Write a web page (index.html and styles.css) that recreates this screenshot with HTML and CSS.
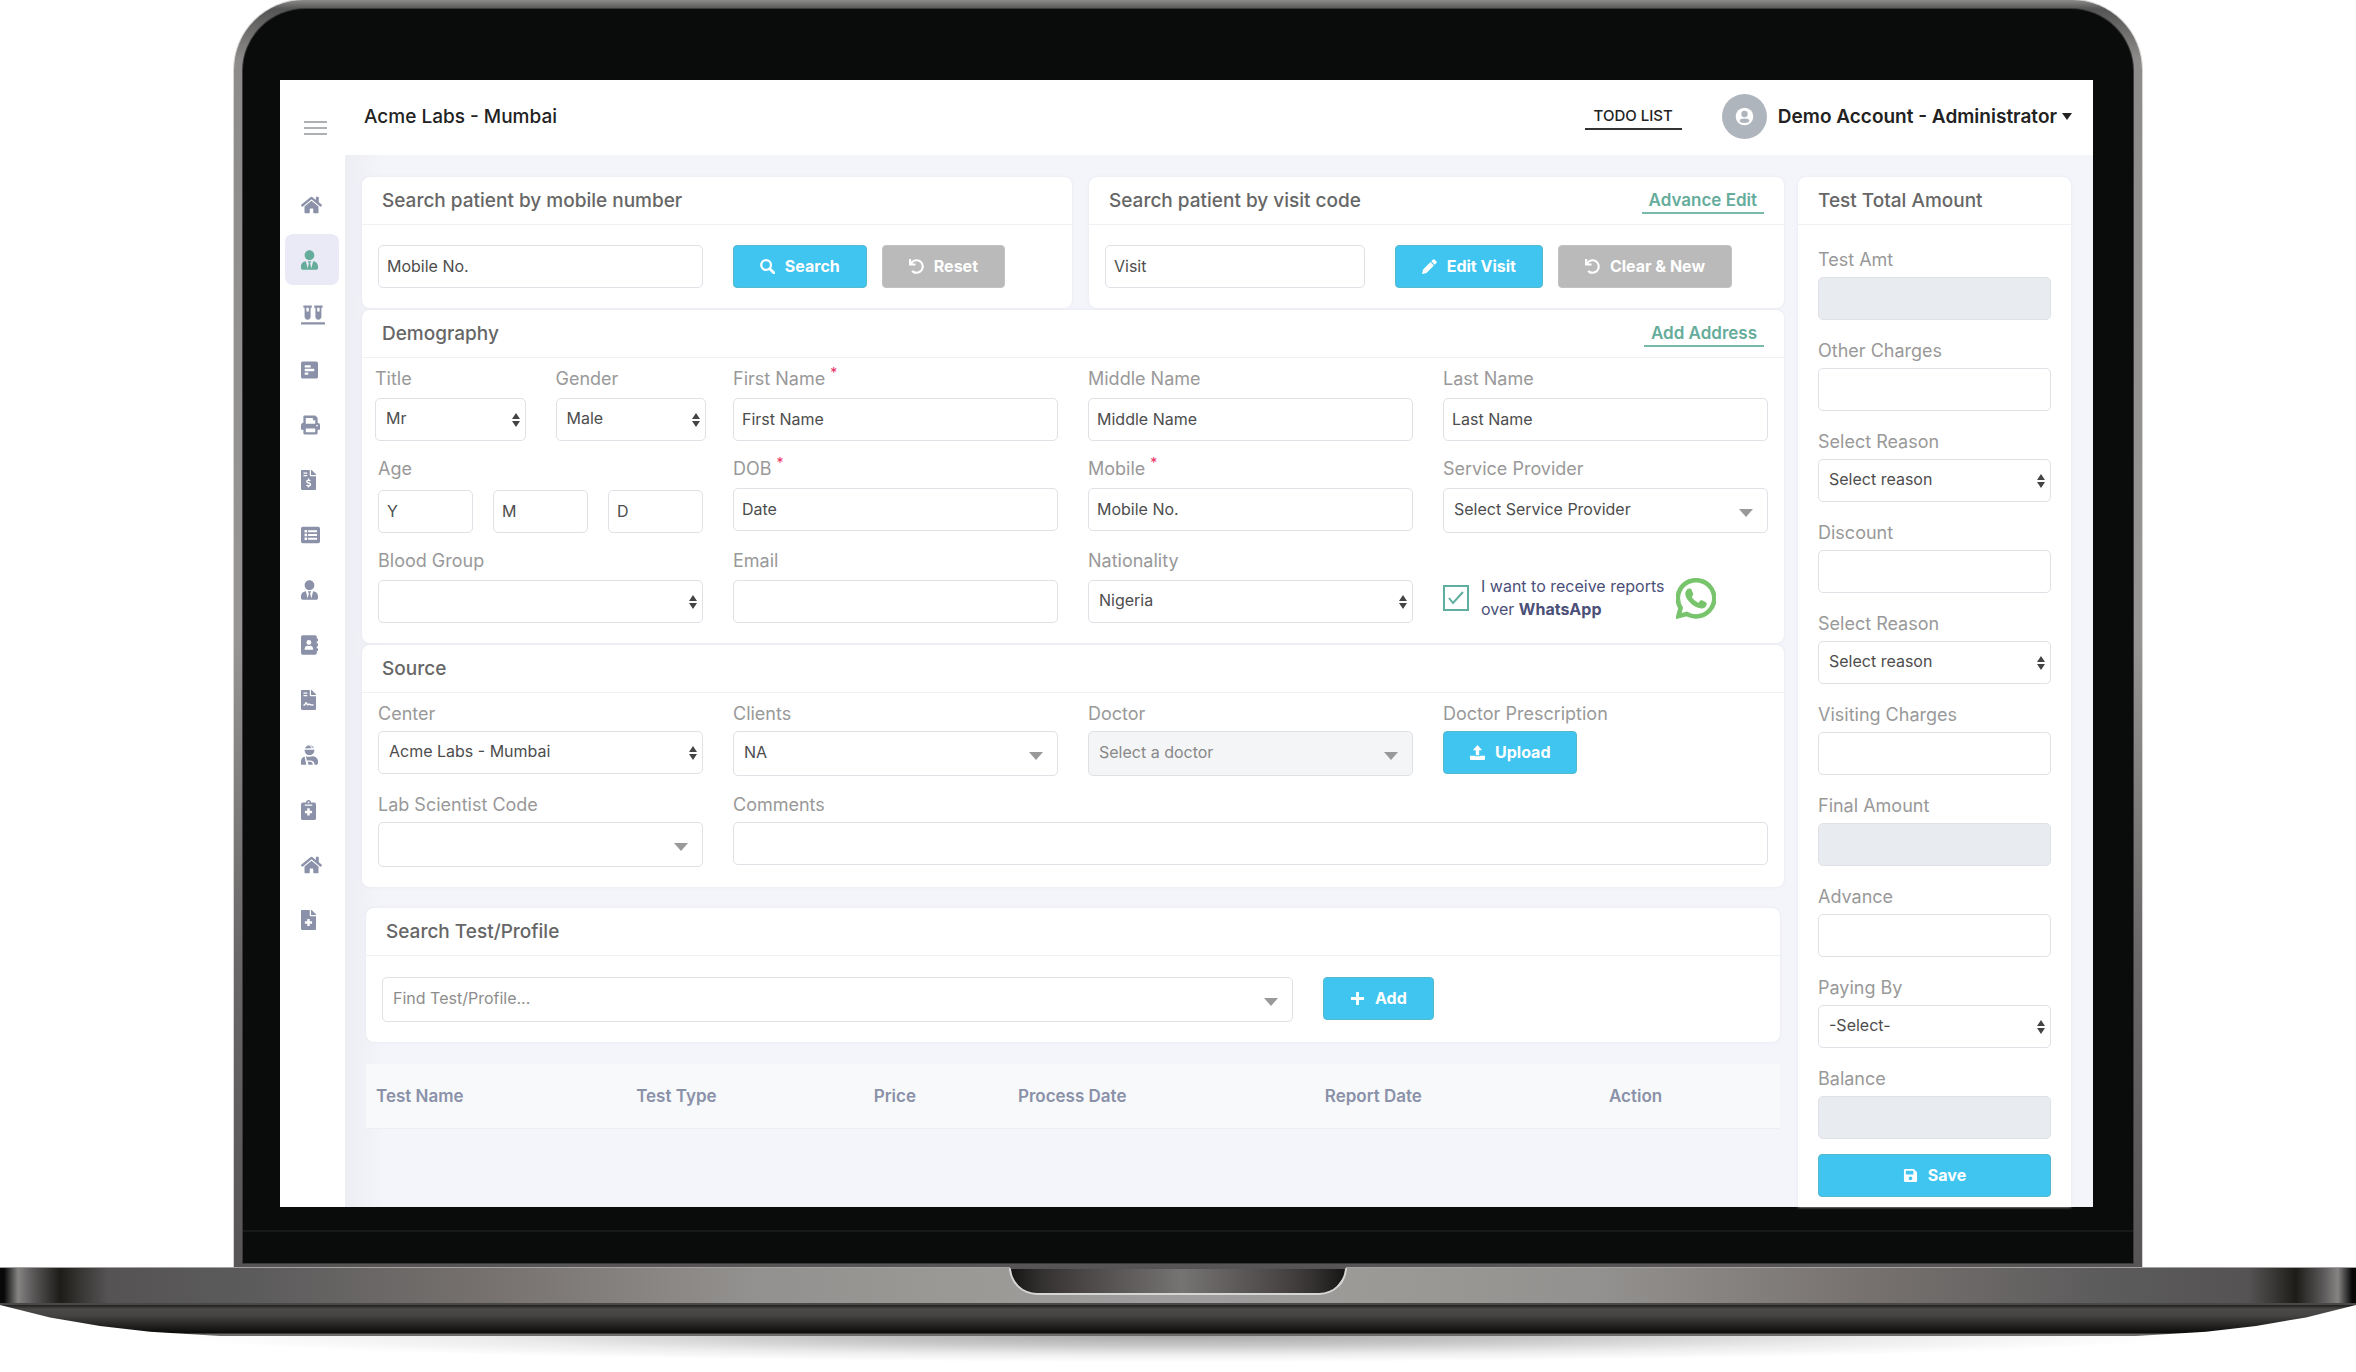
FILE: index.html
```html
<!DOCTYPE html>
<html lang="en">
<head>
<meta charset="utf-8">
<meta name="viewport" content="width=device-width, initial-scale=1">
<title>Acme Labs - Mumbai</title>
<link rel="stylesheet" href="styles.css">
</head>
<body>
<svg class="sprite" aria-hidden="true">
  <symbol id="home" viewBox="0 0 576 512"><path d="M280.37 148.26L96 300.11V464a16 16 0 0 0 16 16l112.06-.29a16 16 0 0 0 15.92-16V368a16 16 0 0 1 16-16h64a16 16 0 0 1 16 16v95.64a16 16 0 0 0 16 16.05L464 480a16 16 0 0 0 16-16V300L295.67 148.26a12.19 12.19 0 0 0-15.3 0zM571.6 251.47L488 182.56V44.05a12 12 0 0 0-12-12h-56a12 12 0 0 0-12 12v72.61L318.47 43a48 48 0 0 0-61 0L4.34 251.47a12 12 0 0 0-1.6 16.9l25.5 31A12 12 0 0 0 45.15 301l235.22-193.74a12.19 12.19 0 0 1 15.3 0L530.9 301a12 12 0 0 0 16.9-1.6l25.5-31a12 12 0 0 0-1.7-16.93z"/></symbol>
  <symbol id="user-tie" viewBox="0 0 448 512"><path d="M224 256c70.7 0 128-57.3 128-128S294.7 0 224 0 96 57.3 96 128s57.3 128 128 128zm95.8 32.6L272 480l-32-136 32-56h-96l32 56-32 136-47.8-191.4C56.9 292 0 350.3 0 422.4V464c0 26.5 21.5 48 48 48h352c26.5 0 48-21.5 48-48v-41.6c0-72.1-56.9-130.4-128.2-133.8z"/></symbol>
  <symbol id="vials" viewBox="0 0 640 512"><path d="M72 64h24v240c0 44.1 35.9 80 80 80s80-35.9 80-80V64h24c4.4 0 8-3.6 8-8V8c0-4.4-3.6-8-8-8H72c-4.4 0-8 3.6-8 8v48c0 4.4 3.6 8 8 8zm72 0h64v96h-64V64zm480 384H16c-8.8 0-16 7.2-16 16v32c0 8.8 7.2 16 16 16h608c8.8 0 16-7.2 16-16v-32c0-8.8-7.2-16-16-16zM360 64h24v240c0 44.1 35.9 80 80 80s80-35.9 80-80V64h24c4.4 0 8-3.6 8-8V8c0-4.4-3.6-8-8-8H360c-4.4 0-8 3.6-8 8v48c0 4.4 3.6 8 8 8zm72 0h64v96h-64V64z"/></symbol>
  <symbol id="poll" viewBox="0 0 448 512"><path d="M448 432V80c0-26.5-21.5-48-48-48H48C21.5 32 0 53.5 0 80v352c0 26.5 21.5 48 48 48h352c26.5 0 48-21.5 48-48zM112 192c-8.84 0-16-7.16-16-16v-32c0-8.84 7.16-16 16-16h128c8.84 0 16 7.16 16 16v32c0 8.84-7.16 16-16 16H112zm0 96c-8.84 0-16-7.16-16-16v-32c0-8.84 7.16-16 16-16h224c8.84 0 16 7.16 16 16v32c0 8.84-7.16 16-16 16H112zm0 96c-8.84 0-16-7.16-16-16v-32c0-8.84 7.16-16 16-16h64c8.84 0 16 7.16 16 16v32c0 8.84-7.16 16-16 16h-64z"/></symbol>
  <symbol id="print" viewBox="0 0 512 512"><path d="M448 192V77.25c0-8.49-3.37-16.62-9.37-22.63L393.37 9.37c-6-6-14.14-9.37-22.63-9.37H96C78.33 0 64 14.33 64 32v160c-35.35 0-64 28.65-64 64v112c0 8.84 7.16 16 16 16h48v96c0 17.67 14.33 32 32 32h320c17.67 0 32-14.33 32-32v-96h48c8.84 0 16-7.16 16-16V256c0-35.35-28.65-64-64-64zm-64 256H128v-96h256v96zm0-224H128V64h192v48c0 8.84 7.16 16 16 16h48v96zm48 72c-13.25 0-24-10.75-24-24 0-13.26 10.75-24 24-24s24 10.74 24 24c0 13.25-10.75 24-24 24z"/></symbol>
  <symbol id="file" viewBox="0 0 384 512"><path d="M224 136V0H24C10.700 0 0 10.700 0 24v464c0 13.300 10.700 24 24 24h336c13.300 0 24-10.700 24-24V160H248c-13.200 0-24-10.800-24-24z"/><path d="M384 121.900v6.100H256V0h6.100c6.400 0 12.500 2.500 17 7l97.900 98c4.500 4.500 7 10.600 7 16.900z"/></symbol>
  <symbol id="invoice" viewBox="0 0 384 512"><use href="#file"/><g fill="none" stroke="#fff" stroke-width="28"><path d="M64 80h96M64 144h96"/><path stroke-width="36" d="M240 278c-24-20-94-22-94 18 0 48 98 26 98 74 0 42-74 40-102 16M192 220v44M192 400v46"/></g></symbol>
  <symbol id="contract" viewBox="0 0 384 512"><use href="#file"/><g fill="none" stroke="#fff"><path stroke-width="28" d="M64 80h96M64 144h96"/><path stroke-width="36" d="M64 384h24c22 0 26-58 44-58 20 0 18 58 40 56 24-2 28-40 50-14 10 16 30 16 98 16"/></g></symbol>
  <symbol id="medical" viewBox="0 0 384 512"><use href="#file"/><path fill="#fff" d="M160 230h64v58h60v64h-60v60h-64v-60h-60v-64h60z"/></symbol>
  <symbol id="list" viewBox="0 0 512 512"><rect y="32" width="512" height="448" rx="48"/><path fill="#fff" d="M96 122h68v68H96zM96 222h68v68H96zM96 322h68v68H96zM192 128h240v56H192zM192 228h240v56H192zM192 328h240v56H192z"/></symbol>
  <symbol id="book" viewBox="0 0 448 512"><rect width="416" height="512" rx="48"/><rect x="400" y="84" width="48" height="76" rx="14"/><rect x="400" y="212" width="48" height="76" rx="14"/><rect x="400" y="340" width="48" height="76" rx="14"/><circle cx="208" cy="190" r="64" fill="#fff"/><path fill="#fff" d="M96 384v-30c0-44 34-76 70-80 26 12 58 12 84 0 36 4 70 36 70 80v30z"/></symbol>
  <symbol id="injured" viewBox="0 0 448 512"><path d="M224 0c50 0 94 28 114 70L106 82C128 32 172 0 224 0zM98 116h252c12 76-46 140-126 140S86 192 98 116z"/><path fill="#fff" d="M210 0l70 70h36L246 0z"/><path d="M0 512v-90c0-60 38-110 92-127l48 217zM128 288c30 10 50 14 96 14 34 0 66-8 92-14 74 6 132 64 132 134v42c0 26-22 48-48 48h-42c0-60-42-112-120-112h-84z"/><path d="M176 436h62c42 0 72 30 72 76H196z"/></symbol>
  <symbol id="clipboard" viewBox="0 0 384 512"><rect y="64" width="384" height="448" rx="48"/><circle cx="192" cy="64" r="64"/><circle cx="192" cy="60" r="24" fill="#fff"/><path fill="#fff" d="M96 118h192v30H96zM160 212h64v60h60v64h-60v60h-64v-60h-60v-64h60z"/></symbol>
  <symbol id="undo" viewBox="0 0 512 512"><path d="M212.333 224.333H12c-6.627 0-12-5.373-12-12V12C0 5.373 5.373 0 12 0h48c6.627 0 12 5.373 12 12v78.112C117.773 39.279 184.26 7.47 258.175 8.007c136.906.994 246.448 111.623 246.157 248.532C504.041 393.258 393.12 504 256.333 504c-64.089 0-122.496-24.313-166.51-64.215-5.099-4.622-5.334-12.554-.467-17.42l33.967-33.967c4.474-4.474 11.662-4.717 16.401-.525C170.76 415.336 211.58 432 256.333 432c97.268 0 176-78.716 176-176 0-97.267-78.716-176-176-176-58.496 0-110.28 28.476-142.274 72.333h98.274c6.627 0 12 5.373 12 12v48c0 6.627-5.373 12-12 12z"/></symbol>
  <symbol id="search" viewBox="0 0 16 16"><circle cx="6.500" cy="6.500" r="5.200" fill="none" stroke="currentColor" stroke-width="2.400"/><path d="M10.400 10.400l4.300 4.300" stroke="currentColor" stroke-width="3" stroke-linecap="round"/></symbol>
  <symbol id="pencil" viewBox="0 0 16 16"><path d="M11.600.8a1.500 1.500 0 0 1 2.100 0l1.500 1.500a1.500 1.500 0 0 1 0 2.100l-1.700 1.700-3.600-3.600zM9.100 3.300l3.600 3.600-7.900 7.900L0 16l1.200-4.800z"/></symbol>
  <symbol id="upload" viewBox="0 0 16 16"><path d="M8 0l5 5.500H9.800V11H6.200V5.500H3z"/><path d="M0 11.500h5.200V12h5.600v-.5H16V15a1 1 0 0 1-1 1H1a1 1 0 0 1-1-1z"/></symbol>
  <symbol id="plus" viewBox="0 0 16 16"><path d="M6.500 1h3v5.500H15v3H9.500V15h-3V9.500H1v-3h5.500z"/></symbol>
  <symbol id="save" viewBox="0 0 16 16"><path fill-rule="evenodd" d="M2.500 1h9L15 4.500v9a1.500 1.500 0 0 1-1.500 1.500h-11A1.500 1.500 0 0 1 1 13.500v-11A1.500 1.500 0 0 1 2.500 1zM3 3v4h8V3zm5 6a2 2 0 1 0 0 4 2 2 0 0 0 0-4z"/></symbol>
  <symbol id="whatsapp" viewBox="0 32 448 448"><path d="M380.9 97.1C339 55.1 283.2 32 223.900 32c-122.400 0-222 99.600-222 222 0 39.100 10.200 77.300 29.600 111L0 480l117.700-30.900c32.400 17.700 68.900 27 106.100 27h.1c122.300 0 224.100-99.600 224.100-222 0-59.300-25.200-115-67.100-157zm-157 341.600c-33.200 0-65.700-8.900-94-25.700l-6.700-4-69.800 18.300L72 359.200l-4.400-7c-18.500-29.400-28.200-63.300-28.200-98.200 0-101.700 82.800-184.500 184.600-184.500 49.300 0 95.600 19.200 130.400 54.100 34.800 34.900 56.200 81.200 56.100 130.500 0 101.800-84.900 184.600-186.600 184.600zm101.200-138.200c-5.500-2.800-32.800-16.200-37.900-18-5.100-1.900-8.800-2.800-12.500 2.800-3.700 5.600-14.300 18-17.600 21.800-3.200 3.700-6.500 4.200-12 1.400-32.600-16.300-54-29.100-75.500-66-5.700-9.800 5.700-9.100 16.300-30.300 1.800-3.700.9-6.900-.5-9.700-1.400-2.800-12.500-30.100-17.100-41.200-4.500-10.800-9.100-9.300-12.500-9.500-3.200-.2-6.900-.2-10.600-.2-3.700 0-9.700 1.400-14.800 6.900-5.100 5.600-19.400 19-19.400 46.300 0 27.300 19.900 53.700 22.600 57.400 2.800 3.700 39.100 59.700 94.800 83.800 35.200 15.200 49 16.500 66.600 13.900 10.700-1.600 32.800-13.400 37.400-26.400 4.600-13 4.600-24.100 3.200-26.400-1.300-2.500-5-3.900-10.500-6.600z" stroke="currentColor" stroke-width="14"/></symbol>
</svg>

<div class="laptop">
  <div class="lid">
    <div class="bezel">
      <div class="app">
        <aside class="sidebar">
          <button class="menu" type="button" aria-label="Toggle menu"><span></span><span></span><span></span></button>
          <nav class="nav" aria-label="Main">
            <a href="#" aria-label="Home"><svg class="w21"><use href="#home"/></svg></a>
            <a href="#" aria-label="Patients" class="active"><svg class="w17"><use href="#user-tie"/></svg></a>
            <a href="#" aria-label="Samples"><svg class="w24"><use href="#vials"/></svg></a>
            <a href="#" aria-label="Results"><svg class="w17"><use href="#poll"/></svg></a>
            <a href="#" aria-label="Print"><svg class="w19"><use href="#print"/></svg></a>
            <a href="#" aria-label="Invoices"><svg class="w15"><use href="#invoice"/></svg></a>
            <a href="#" aria-label="Lists"><svg class="w19"><use href="#list"/></svg></a>
            <a href="#" aria-label="Staff"><svg class="w17"><use href="#user-tie"/></svg></a>
            <a href="#" aria-label="Contacts"><svg class="w17"><use href="#book"/></svg></a>
            <a href="#" aria-label="Contracts"><svg class="w15"><use href="#contract"/></svg></a>
            <a href="#" aria-label="Care"><svg class="w17"><use href="#injured"/></svg></a>
            <a href="#" aria-label="Notes"><svg class="w15"><use href="#clipboard"/></svg></a>
            <a href="#" aria-label="Centers"><svg class="w21"><use href="#home"/></svg></a>
            <a href="#" aria-label="Records"><svg class="w15"><use href="#medical"/></svg></a>
          </nav>
        </aside>

        <div class="main">
          <header class="topbar">
            <h1>Acme Labs - Mumbai</h1>
            <a class="todo" href="#">TODO LIST</a>
            <button class="account" type="button">
              <svg class="avatar" viewBox="0 0 45 45"><circle cx="22.500" cy="22.500" r="22.500" fill="#aeb5bd"/><circle cx="22.500" cy="22.500" r="8.800" fill="#fff"/><circle cx="22.500" cy="20" r="3.200" fill="#aeb5bd"/><ellipse cx="22.500" cy="26.800" rx="4.800" ry="2.200" fill="#aeb5bd"/></svg>
              <span>Demo Account - Administrator</span>
              <i class="caret"></i>
            </button>
          </header>

          <div class="content">
            <main class="forms">
              <div class="searches">
                <section class="card">
                  <header><h2>Search patient by mobile number</h2></header>
                  <form class="bar">
                    <input class="control grow" type="text" placeholder="Mobile No." aria-label="Mobile number">
                    <div class="buttons">
                      <button class="btn" type="button"><svg><use href="#search"/></svg>Search</button>
                      <button class="btn muted" type="button"><svg><use href="#undo"/></svg>Reset</button>
                    </div>
                  </form>
                </section>
                <section class="card">
                  <header><h2>Search patient by visit code</h2><a href="#">Advance Edit</a></header>
                  <form class="bar">
                    <input class="control grow" type="text" placeholder="Visit" aria-label="Visit code">
                    <div class="buttons">
                      <button class="btn" type="button"><svg><use href="#pencil"/></svg>Edit Visit</button>
                      <button class="btn muted" type="button"><svg><use href="#undo"/></svg>Clear &amp; New</button>
                    </div>
                  </form>
                </section>
              </div>

              <section class="card">
                <header><h2>Demography</h2><a href="#">Add Address</a></header>
                <form class="fields">
                  <div class="pair">
                    <div class="field"><label for="title">Title</label><select class="control updown" id="title"><option>Mr</option></select></div>
                    <div class="field"><label for="gender">Gender</label><select class="control updown" id="gender"><option>Male</option></select></div>
                  </div>
                  <div class="field"><label for="first">First Name <sup>*</sup></label><input class="control" id="first" type="text" placeholder="First Name"></div>
                  <div class="field"><label for="middle">Middle Name</label><input class="control" id="middle" type="text" placeholder="Middle Name"></div>
                  <div class="field"><label for="last">Last Name</label><input class="control" id="last" type="text" placeholder="Last Name"></div>

                  <div class="field age">
                    <label for="years">Age</label>
                    <div class="trio">
                      <input class="control" id="years" type="text" placeholder="Y">
                      <input class="control" type="text" placeholder="M" aria-label="Months">
                      <input class="control" type="text" placeholder="D" aria-label="Days">
                    </div>
                  </div>
                  <div class="field"><label for="dob">DOB <sup>*</sup></label><input class="control" id="dob" type="text" placeholder="Date"></div>
                  <div class="field"><label for="mobile">Mobile <sup>*</sup></label><input class="control" id="mobile" type="text" placeholder="Mobile No."></div>
                  <div class="field"><label for="provider">Service Provider</label><select class="control drop" id="provider"><option>Select Service Provider</option></select></div>

                  <div class="field"><label for="blood">Blood Group</label><select class="control updown" id="blood"><option></option></select></div>
                  <div class="field"><label for="email">Email</label><input class="control" id="email" type="email"></div>
                  <div class="field"><label for="nation">Nationality</label><select class="control updown" id="nation"><option>Nigeria</option></select></div>
                  <div class="consent">
                    <input type="checkbox" id="wa" checked>
                    <label for="wa">I want to receive reports<br>over <b>WhatsApp</b></label>
                    <svg><use href="#whatsapp"/></svg>
                  </div>
                </form>
              </section>

              <section class="card">
                <header><h2>Source</h2></header>
                <form class="fields tight">
                  <div class="field"><label for="center">Center</label><select class="control updown" id="center"><option>Acme Labs - Mumbai</option></select></div>
                  <div class="field"><label for="clients">Clients</label><select class="control drop" id="clients"><option>NA</option></select></div>
                  <div class="field"><label for="doctor">Doctor</label><select class="control drop" id="doctor" disabled><option>Select a doctor</option></select></div>
                  <div class="field"><label for="rx">Doctor Prescription</label><button class="btn" id="rx" type="button"><svg><use href="#upload"/></svg>Upload</button></div>
                  <div class="field"><label for="code">Lab Scientist Code</label><select class="control drop" id="code"><option></option></select></div>
                  <div class="field wide"><label for="comments">Comments</label><input class="control" id="comments" type="text"></div>
                </form>
              </section>

              <div class="tests">
                <section class="card">
                  <header><h2>Search Test/Profile</h2></header>
                  <form class="bar">
                    <select class="control drop hint" aria-label="Find test or profile"><option>Find Test/Profile...</option></select>
                    <button class="btn" type="button"><svg><use href="#plus"/></svg>Add</button>
                  </form>
                </section>
                <table>
                  <thead><tr><th>Test Name</th><th>Test Type</th><th>Price</th><th>Process Date</th><th>Report Date</th><th>Action</th></tr></thead>
                </table>
              </div>
            </main>

            <aside class="card totals">
              <header><h2>Test Total Amount</h2></header>
              <form>
                <div class="field"><label for="amt">Test Amt</label><input class="control" id="amt" type="text" disabled></div>
                <div class="field"><label for="other">Other Charges</label><input class="control" id="other" type="text"></div>
                <div class="field"><label for="r1">Select Reason</label><select class="control updown" id="r1"><option>Select reason</option></select></div>
                <div class="field"><label for="disc">Discount</label><input class="control" id="disc" type="text"></div>
                <div class="field"><label for="r2">Select Reason</label><select class="control updown" id="r2"><option>Select reason</option></select></div>
                <div class="field"><label for="visit">Visiting Charges</label><input class="control" id="visit" type="text"></div>
                <div class="field"><label for="final">Final Amount</label><input class="control" id="final" type="text" disabled></div>
                <div class="field"><label for="adv">Advance</label><input class="control" id="adv" type="text"></div>
                <div class="field"><label for="pay">Paying By</label><select class="control updown" id="pay"><option>-Select-</option></select></div>
                <div class="field last"><label for="bal">Balance</label><input class="control" id="bal" type="text" disabled></div>
                <button class="btn" type="button"><svg><use href="#save"/></svg>Save</button>
              </form>
            </aside>
          </div>
        </div>
      </div>
      <div class="chin"></div>
    </div>
  </div>
  <div class="deck"><div class="notch"></div></div>
  <div class="underside"></div>
  <div class="shadow"></div>
</div>
</body>
</html>
```

FILE: styles.css
```css
* { box-sizing: border-box; }

body {
  margin: 0;
  background: #fff;
  color: #555;
  font: 16px/24px Inter, "Open Sans", sans-serif;
}

h1, h2 { margin: 0; font-weight: 500; }
a { text-decoration: none; }
button, input, select { font: inherit; margin: 0; }
svg { display: block; fill: currentColor; flex: none; }
.sprite { width: 0; height: 0; position: absolute; }

/* Laptop body */
.laptop { overflow: hidden; }

.lid {
  margin: 0 214px 0 234px;
  padding: 9px 9px 4px;
  border-radius: 70px 70px 0 0;
  background: linear-gradient(#8b8b8a, #555 9px, #8e8c8a 60px, #989694 50%, #6a6868 75%, #575556);
  box-shadow: 0 0 0 1px #d4d4d3;
}

.bezel {
  padding: 71px 40px 0 37px;
  border-radius: 62px 62px 0 0;
  background: #090c0b;
  box-shadow: 0 0 0 1px #3a3a3a;
}

.chin { height: 56px; padding-top: 23px; }
.chin::before { content: ""; display: block; height: 2px; margin: 0 -40px 0 -37px; background: #171a19; }

.deck {
  height: 38px;
  border-top: 1px solid #a3a1a1;
  border-bottom: 2px solid #4a4949;
  background: linear-gradient(90deg, #080808 0, #080808 4px, #858483 18px, #5d5b5b 32px, #1d1c19 60px, #3b3a38 84px, #555354 108px, #5d5c5c 11%, #777270 21%, #93918f 32%, #9c9a97 42%, #9f9d9e 50%, #9c9a97 58%, #93918f 68%, #777270 79%, #5d5c5c 89%, #555354 calc(100% - 108px), #3b3a38 calc(100% - 84px), #1d1c19 calc(100% - 60px), #5d5b5b calc(100% - 32px), #858483 calc(100% - 18px), #080808 calc(100% - 4px));
}

.notch {
  width: 338px;
  height: 28px;
  margin: -1px auto 0;
  border: 2px solid #d6d5d5;
  border-top: 2px solid #555;
  border-radius: 0 0 30px 30px;
  background: linear-gradient(90deg, #151513, #33312f 9%, #4b4747 22%, #767473 51%, #4b4747 80%, #33312f 91%, #151513);
}

.underside {
  height: 31px;
  background: linear-gradient(#1f1f1e, #4a4946 4px, #474543 10px, #0b0b0a 28px, #6c6a6a 29px);
  clip-path: polygon(0 0, 100% 0, calc(100% - 50px) 40%, calc(100% - 100px) 68%, calc(100% - 150px) 86%, calc(100% - 220px) 100%, 220px 100%, 150px 86%, 100px 68%, 50px 40%);
}

.shadow {
  height: 26px;
  margin: 0 180px;
  background: radial-gradient(ellipse 50% 100% at 50% 0, #aaa, #c6c6c6 35%, #ececec 70%, #fff);
}

/* Application shell */
.app { display: grid; grid-template-columns: 65px 1fr; background: #fff; }

.sidebar { display: flex; flex-direction: column; align-items: flex-start; }

.menu {
  display: flex;
  flex-direction: column;
  gap: 4px;
  margin: 41px 0 44px 24px;
  padding: 0;
  border: 0;
  background: none;
}
.menu span { width: 23px; height: 2px; background: #adb1b6; }

.nav { display: grid; gap: 4px; margin-left: 5px; }
.nav a {
  display: flex;
  align-items: center;
  width: 54px;
  height: 51px;
  padding-left: 16px;
  border-radius: 8px;
  color: #8a91a8;
}
.nav .active { background: #e9eaf6; color: #66ac9b; }
.nav svg { height: 20px; }
.w15 { width: 15px; }
.w17 { width: 17px; }
.w19 { width: 19px; }
.w21 { width: 21px; }
.w24 { width: 24px; }

.main { display: flex; flex-direction: column; min-width: 0; background: #f4f5fa; }

.topbar {
  display: flex;
  align-items: center;
  height: 75px;
  padding: 0 21px 2px 19px;
  background: #fff;
  color: #222;
}
.topbar h1 { flex: 1; font-size: 19px; }

.todo {
  margin-right: 40px;
  padding: 0 9px;
  border-bottom: 2px solid #333;
  color: #222;
  font-size: 15px;
  font-weight: 500;
}

.account {
  display: flex;
  align-items: center;
  padding: 0;
  border: 0;
  background: none;
  color: #222;
  font-size: 19px;
  font-weight: 600;
}
.avatar { width: 45px; height: 45px; margin-right: 11px; }
.caret { margin-left: 5px; border: 5px solid transparent; border-top: 7px solid #222; border-bottom: 0; }

.content {
  flex: 1;
  display: grid;
  grid-template-columns: minmax(0, 1fr) 273px;
  gap: 14px;
  padding: 22px 22px 0 17px;
  background: linear-gradient(90deg, #ededf4, #f4f5fa 40px);
}

/* Cards */
.card { border-radius: 8px; background: #fff; box-shadow: 0 0 3px #e4e5ec; }
.card > header {
  display: flex;
  align-items: center;
  justify-content: space-between;
  height: 48px;
  padding: 0 20px;
  border-bottom: 1px solid #f0f1f4;
}
.card h2 { color: #666; font-size: 19px; }
.card header a {
  padding: 0 7px;
  border-bottom: 2px solid #79b9ab;
  color: #66ac9b;
  font-size: 17px;
  font-weight: 600;
}

.forms { display: flex; flex-direction: column; gap: 2px; }
.searches { display: grid; grid-template-columns: 710fr 695fr; gap: 17px; }

.bar { display: flex; gap: 30px; padding: 20px 16px; }
.bar .grow { flex: 1; }
.buttons { display: flex; gap: 15px; padding-right: 36px; }
.searches .card:first-child .buttons { padding-right: 51px; }

/* Form controls */
.control {
  display: block;
  width: 100%;
  min-width: 0;
  height: 43px;
  padding: 0 8px 2px;
  border: 1px solid #dfe1e6;
  border-radius: 5px;
  background: #fff;
  color: #4d4d4d;
  appearance: none;
}
.control::placeholder { color: #4d4d4d; opacity: 1; }
.control:disabled { background-color: #e8ecf0; opacity: 1; }

.updown {
  padding: 0 24px 3px 10px;
  background: #fff url("data:image/svg+xml,%3Csvg xmlns='http://www.w3.org/2000/svg' width='8' height='14'%3E%3Cpath d='M0 6l4-6 4 6zM0 8h8l-4 6z' fill='%23444'/%3E%3C/svg%3E") no-repeat right 5px center;
}
.drop {
  height: 45px;
  padding: 0 40px 4px 10px;
  background: #fff url("data:image/svg+xml,%3Csvg xmlns='http://www.w3.org/2000/svg' width='14' height='12'%3E%3Cpath d='M0 4h14l-7 8z' fill='%23999'/%3E%3C/svg%3E") no-repeat right 14px center;
}
.drop:disabled { background-color: #f4f5f7; color: #888; }
.hint { color: #8d8d8d; }

.btn {
  display: flex;
  align-items: center;
  justify-content: center;
  gap: 10px;
  height: 43px;
  padding: 0 26px 1px;
  border: 1px solid #55b9cc;
  border-radius: 4px;
  background: #3fc5f0;
  color: #fff;
  font-weight: 700;
  white-space: nowrap;
}
.btn svg { width: 15px; height: 15px; }
.muted { border-color: #c2c2c2; background: #bababa; }

.fields {
  display: grid;
  grid-template-columns: repeat(4, minmax(0, 1fr));
  gap: 14px 30px;
  padding: 7px 16px 20px;
}
.field label { display: block; margin-bottom: 5px; color: #999; font-size: 18px; line-height: 28px; }
.field sup { color: #e8305f; font-size: 14px; line-height: 0; }
.age label { margin-bottom: 7px; }
.pair { display: grid; grid-template-columns: 1fr 1fr; gap: 30px; margin: 0 -3px; }
.trio { display: grid; grid-template-columns: repeat(3, 1fr); gap: 20px; }

.tight { gap: 15px 30px; padding-top: 7px; }
.tight label, .totals label { margin-bottom: 3px; }
.wide { grid-column: span 3; }

.consent { display: flex; align-items: center; align-self: end; gap: 12px; padding-bottom: 2px; }
.consent input {
  width: 26px;
  height: 26px;
  border: 2px solid #5fae9f;
  appearance: none;
  background: url("data:image/svg+xml,%3Csvg xmlns='http://www.w3.org/2000/svg' width='16' height='14'%3E%3Cpath d='M1 7l4 5L15 1' fill='none' stroke='%235fae9f' stroke-width='2'/%3E%3C/svg%3E") no-repeat center;
}
.consent label { color: #4b5078; font-size: 16px; line-height: 23px; }
.consent svg { width: 40px; height: 41px; color: #78c46c; }

/* Tests */
.tests { display: grid; gap: 22px; margin: 19px 4px 0; }
.tests .bar { padding: 21px 16px 20px; }
.tests .hint { flex: 0 1 911px; }

table { width: 100%; border-collapse: collapse; table-layout: fixed; background: #f8f9fb; }
th {
  height: 64px;
  padding: 0 10px;
  border-bottom: 1px solid #eceef3;
  color: #8a91a8;
  font-size: 17px;
  font-weight: 600;
  text-align: left;
}
th:nth-child(1) { width: 18.4%; }
th:nth-child(2) { width: 16.8%; }
th:nth-child(3) { width: 10.2%; }
th:nth-child(4) { width: 21.7%; }
th:nth-child(5) { width: 20.1%; }

/* Totals */
.totals { border-radius: 8px 8px 0 0; }
.totals form { display: grid; gap: 17px; padding: 21px 20px 10px; }
.totals .last { margin-bottom: -2px; }
.totals .btn { width: 100%; }
```
